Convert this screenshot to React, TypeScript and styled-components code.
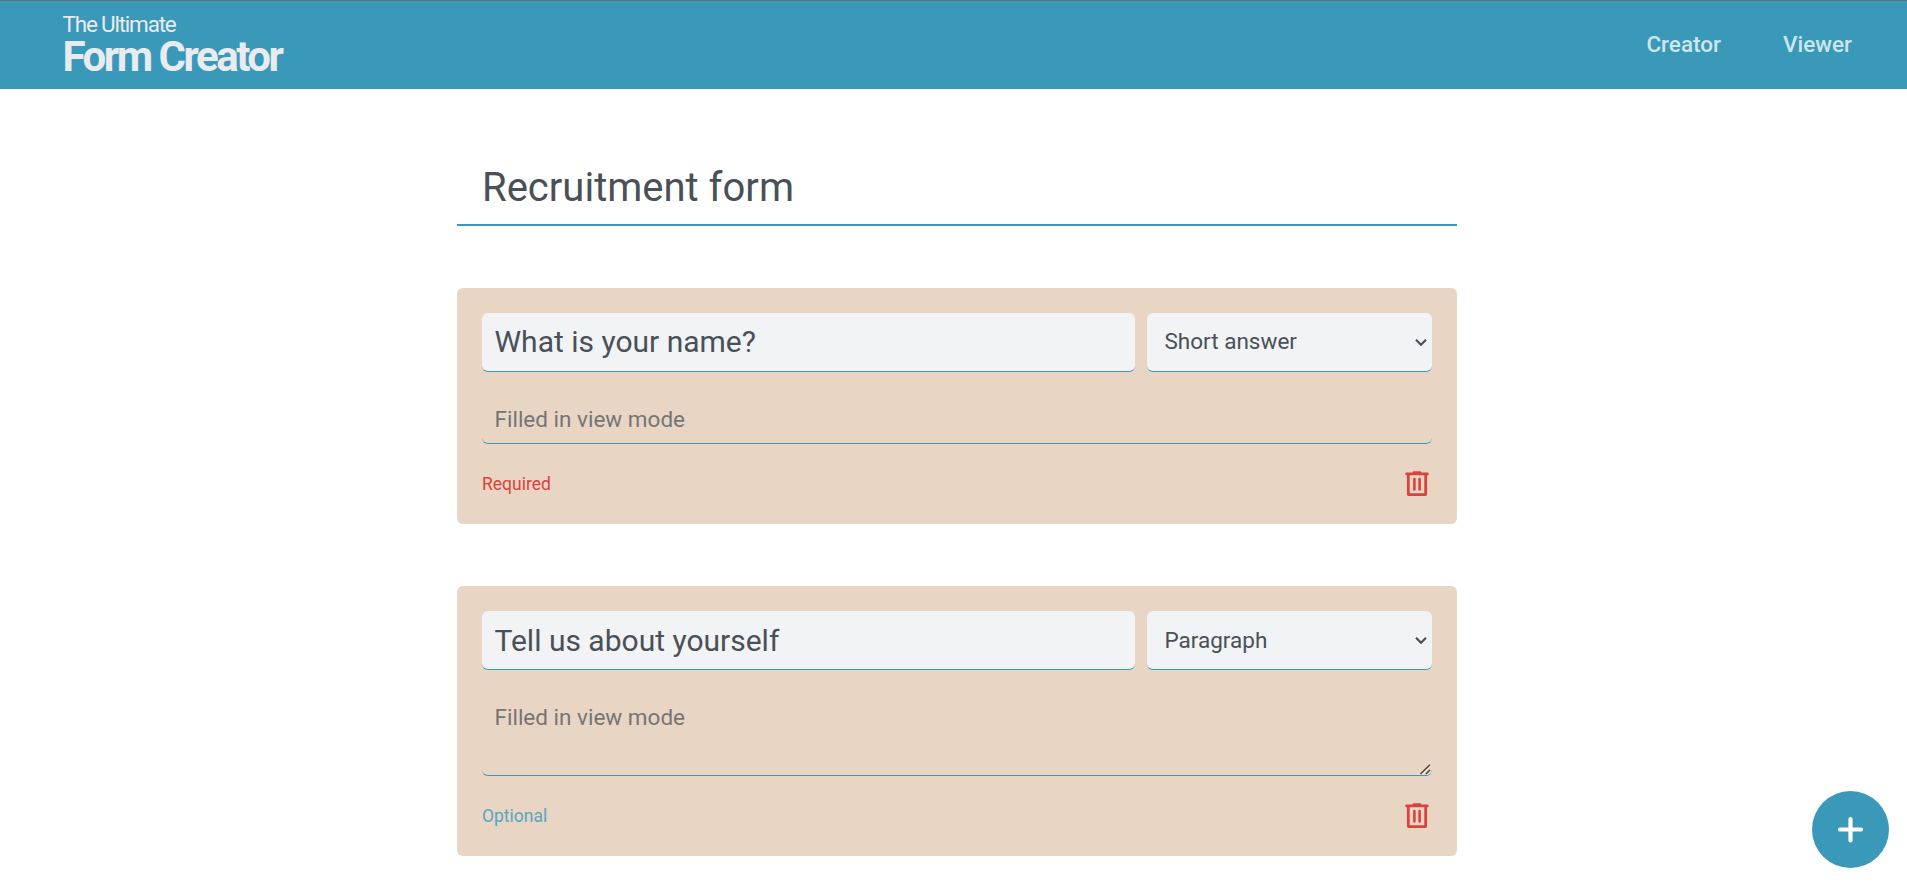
import React from "react";
import styled, { createGlobalStyle } from "styled-components";

const blue = "#3a98b9";
const light = "#e8ecef";
const ink = "#495057";

const GlobalStyle = createGlobalStyle`
  * { box-sizing: border-box; margin: 0; padding: 0; }
  body { font-family: Roboto, sans-serif; color: ${ink}; background: #fff; height: 885px; overflow: hidden; }
  input, select, textarea, button { font-family: inherit; color: inherit; border: none; outline: none; }
`;

const Header = styled.header`
  height: 89px;
  padding: 0 55px 2px 62.5px;
  display: flex;
  justify-content: space-between;
  align-items: center;
  background: ${blue};
  border-top: 1px solid #6b6f73;
`;

const Logo = styled.div`
  display: flex;
  flex-direction: column;
  color: ${light};
`;

const LogoTop = styled.span`
  font-size: 22.5px;
  line-height: 26px;
  letter-spacing: -1.2px;
`;

const LogoName = styled.h1`
  font-size: 42px;
  line-height: 40px;
  font-weight: 700;
  letter-spacing: -2.5px;
`;

const Nav = styled.nav`
  display: flex;
  gap: 62px;
`;

const NavLink = styled.a`
  font-size: 22.5px;
  line-height: 27px;
  font-weight: 500;
  color: #cde6ee;
`;

const Main = styled.main`
  width: 1000px;
  margin: 61px 0 0 457px;
  display: flex;
  flex-direction: column;
  gap: 62px;
`;

const FormTitle = styled.input`
  height: 76px;
  padding: 0 25px;
  font-size: 40px;
  background: transparent;
  border-bottom: 2px solid ${blue};
`;

const Card = styled.section`
  padding: 25px;
  border-radius: 6px;
  background: #e8d5c4;
`;

const Row = styled.div`
  display: grid;
  grid-template-columns: 653px 285px;
  gap: 12px;
`;

const QuestionInput = styled.input<{ $lift: number }>`
  height: 59px;
  padding: 0 12.5px ${(p) => p.$lift}px;
  font-size: 30px;
  border-radius: 6px;
  background: #f1f3f5;
  border-bottom: 1px solid ${blue};
`;

const SelectWrap = styled.div`
  position: relative;
  display: flex;
  svg { position: absolute; right: 4px; top: 24px; pointer-events: none; }
`;

const TypeSelect = styled.select<{ $lift: number }>`
  appearance: none;
  width: 100%;
  height: 59px;
  padding: 0 0 ${(p) => p.$lift}px 17.5px;
  font-size: 22.5px;
  border-radius: 6px;
  background: #f1f3f5;
  border-bottom: 1px solid ${blue};
`;

const ShortAnswer = styled.input`
  display: block;
  width: 100%;
  height: 47px;
  margin-top: 25px;
  padding: 0 12.5px 2px;
  font-size: 22.5px;
  border-radius: 6px;
  background: transparent;
  border-bottom: 1px solid ${blue};
  &::placeholder { color: #757575; }
`;

const LongWrap = styled.div`
  position: relative;
  margin-top: 25px;
  svg { position: absolute; right: 1px; bottom: 1px; pointer-events: none; }
`;

const LongAnswer = styled.textarea`
  display: block;
  width: 100%;
  height: 81px;
  padding: 9px 12.5px;
  font-size: 22.5px;
  resize: none;
  border-radius: 6px;
  background: transparent;
  border-bottom: 1px solid ${blue};
  &::placeholder { color: #757575; }
`;

const Footer = styled.footer`
  height: 30px;
  margin-top: 25px;
  display: flex;
  justify-content: space-between;
  align-items: center;
`;

const Status = styled.span<{ $required?: boolean }>`
  font-size: 17.5px;
  color: ${(p) => (p.$required ? "#d9433f" : "#58a6c0")};
`;

const DeleteButton = styled.button`
  width: 30px;
  height: 30px;
  background: transparent;
  color: #d9433f;
  svg { display: block; }
`;

const AddButton = styled.button`
  position: fixed;
  right: 18px;
  bottom: 17px;
  width: 77px;
  height: 77px;
  border-radius: 50%;
  display: flex;
  align-items: center;
  justify-content: center;
  background: ${blue};
  color: #fff;
`;

const TrashIcon = () => (
  <svg width="30" height="30" viewBox="0 0 30 30" fill="none" stroke="currentColor" strokeLinecap="round" strokeLinejoin="round">
    <path d="M4.6 4.9h20.8" strokeWidth="2.6" />
    <path d="M11.8 3.3h6.4" strokeWidth="2.3" />
    <path d="M6.3 5.5v18.9a1.2 1.2 0 0 0 1.2 1.2h15a1.2 1.2 0 0 0 1.2-1.2V5.5" strokeWidth="2.8" />
    <path d="M12.4 10v10.4M17.6 10v10.4" strokeWidth="2.6" />
  </svg>
);

const PlusIcon = () => (
  <svg width="30" height="30" viewBox="0 0 30 30" fill="none" stroke="currentColor" strokeWidth="4.2" strokeLinecap="round">
    <path d="M14.5 4.2v21.2M4 14.5h21" />
  </svg>
);

const ChevronIcon = () => (
  <svg width="14" height="12" viewBox="0 0 14 12" fill="none" stroke="currentColor" strokeWidth="2.2">
    <path d="M2 2.8l5 5 5-5" />
  </svg>
);

const ResizeGrip = () => (
  <svg width="12" height="12" viewBox="0 0 12 12" fill="none">
    <path d="M3 11.5l8.5-8.5M8.5 11.5l3-3" stroke="#f4ece5" strokeWidth="1.2" />
    <path d="M1.5 11L11 1.8M7 11l4-4" stroke="#4c4643" strokeWidth="1.6" />
  </svg>
);

type QuestionProps = { title: string; type: string; long?: boolean; required?: boolean };

const Question = ({ title, type, long, required }: QuestionProps) => (
  <Card>
    <Row>
      <QuestionInput $lift={long ? 0 : 2} defaultValue={title} />
      <SelectWrap>
        <TypeSelect $lift={long ? 0 : 2} defaultValue={type}>
          <option>Short answer</option>
          <option>Paragraph</option>
        </TypeSelect>
        <ChevronIcon />
      </SelectWrap>
    </Row>
    {long ? (
      <LongWrap>
        <LongAnswer placeholder="Filled in view mode" />
        <ResizeGrip />
      </LongWrap>
    ) : (
      <ShortAnswer placeholder="Filled in view mode" />
    )}
    <Footer>
      <Status $required={required}>{required ? "Required" : "Optional"}</Status>
      <DeleteButton aria-label="Delete question">
        <TrashIcon />
      </DeleteButton>
    </Footer>
  </Card>
);

export default function App() {
  return (
    <>
      <GlobalStyle />
      <Header>
        <Logo>
          <LogoTop>The Ultimate</LogoTop>
          <LogoName>Form Creator</LogoName>
        </Logo>
        <Nav>
          <NavLink>Creator</NavLink>
          <NavLink>Viewer</NavLink>
        </Nav>
      </Header>
      <Main>
        <FormTitle defaultValue="Recruitment form" />
        <Question title="What is your name?" type="Short answer" required />
        <Question title="Tell us about yourself" type="Paragraph" long />
      </Main>
      <AddButton aria-label="Add question">
        <PlusIcon />
      </AddButton>
    </>
  );
}
